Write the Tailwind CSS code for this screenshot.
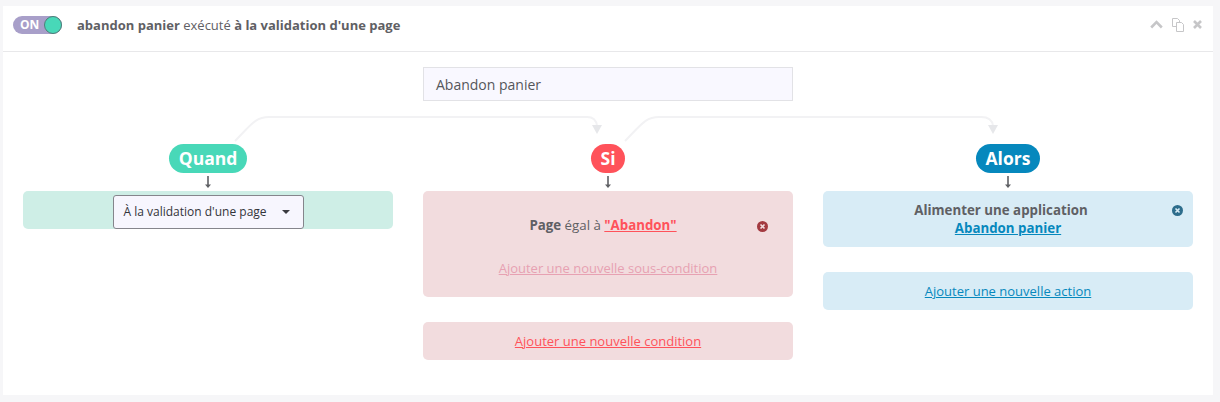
<!DOCTYPE html>
<html lang="fr">

<head>
  <meta charset="UTF-8">
  <title>Abandon panier</title>
  <script src="https://cdn.jsdelivr.net/npm/@tailwindcss/browser@4"></script>
</head>

<body class="bg-[#f6f6f8] font-['Open_Sans',sans-serif] text-[#5f6064] h-[402px] overflow-hidden">
  <div class="pt-[6px] pl-[3px] pr-[7px]">
    <div class="relative bg-white h-[389px]">
      <!-- header -->
      <div class="h-[46px] border-b border-[#e8e8ea] flex items-center pl-[10px] pr-[11px] pb-[8px]">
        <div class="relative w-[49px] h-[18px] rounded-full bg-[#a89fc9] text-white text-[12px] font-bold leading-[18px] pl-[7px]">
          ON
          <span class="absolute right-0 top-0 w-[18px] h-[18px] rounded-full bg-[#48d8b8] border border-[#4d7f78]"></span>
        </div>
        <p class="ml-[15px] text-[13px] leading-[18px]"><b>abandon panier</b> exécuté <b>à la validation d'une page</b></p>
        <div class="ml-auto flex items-center gap-[8px] text-[#c6c6c8]">
          <svg width="13" height="9" viewBox="0 0 13 9" fill="none" stroke="currentColor" stroke-width="2.6"><path d="M1.2 7.5 6.5 2.2l5.3 5.3" /></svg>
          <svg width="14" height="14" viewBox="0 0 14 14" fill="#fff" stroke="currentColor"><path d="M1.500.5h5l2 2v6h-7z" /><path d="M5.500 4.500h5l2 2v7h-7z" /></svg>
          <svg width="9" height="9" viewBox="0 0 9 9" fill="none" stroke="currentColor" stroke-width="2.6"><path d="m1 1 7 7M8 1 1 8" /></svg>
        </div>
      </div>

      <!-- name -->
      <div class="flex justify-center mt-[15px]">
        <div class="w-[370px] h-[34px] border border-[#e2e2e6] bg-[#f9f8ff] px-3 text-[14px] leading-[33px] text-[#55565a]">Abandon panier</div>
      </div>

      <!-- connectors between steps -->
      <svg class="absolute left-0 top-0" width="1210" height="140" fill="none">
        <path d="M232 135C248 119 252 111 266 111H584Q593 111 594 120" stroke="#f2f2f4" stroke-width="2" />
        <path d="M589 119h10l-5 9z" fill="#e6e7ea" />
        <path d="M622 135C638 119 642 111 656 111H978Q989 111 990 120" stroke="#f2f2f4" stroke-width="2" />
        <path d="M985 119h10l-5 9z" fill="#e6e7ea" />
      </svg>

      <!-- columns -->
      <div class="grid grid-cols-[370px_370px_370px] gap-[30px] pl-[20px] mt-[43px]">
        <!-- quand -->
        <div class="flex flex-col items-center">
          <div class="h-[29px] px-[10px] rounded-full bg-[#48d8b8] text-white text-[17.500px] font-bold leading-[29px]">Quand</div>
          <svg class="mt-[3px]" width="8" height="12" viewBox="0 0 8 12" fill="#5f6064"><path d="M3.200 0h1.600v9H3.200z" /><path d="M1 8.500h6L4 12z" /></svg>
          <div class="mt-[3px] w-full h-[38px] rounded-[5px] bg-[#ceeee6] flex justify-center items-end">
            <div class="w-[191px] h-[34px] border border-[#85858c] rounded-[3px] bg-[#f7f6fe] flex items-center justify-between pl-[10px] pr-[13px] text-[12px] text-[#33343a]">
              À la validation d'une page
              <span class="w-0 h-0 border-x-[4px] border-x-transparent border-t-[4px] border-t-[#3a3a40]"></span>
            </div>
          </div>
        </div>

        <!-- si -->
        <div class="flex flex-col items-center">
          <div class="h-[29px] px-[10px] rounded-full bg-[#ff525a] text-white text-[17.500px] font-bold leading-[29px]">Si</div>
          <svg class="mt-[3px]" width="8" height="12" viewBox="0 0 8 12" fill="#5f6064"><path d="M3.200 0h1.600v9H3.200z" /><path d="M1 8.500h6L4 12z" /></svg>
          <div class="relative mt-[3px] w-full h-[106px] rounded-[5px] bg-[#f2dcde] flex flex-col items-center text-[13px]">
            <p class="mt-[25px] leading-[18px] text-[13.300px] mr-[10px]"><b>Page</b> égal à <a href="#" class="font-bold text-[#ff525a] underline">"Abandon"</a></p>
            <a href="#" class="mt-[25px] leading-[18px] text-[#e7a1b2] underline">Ajouter une nouvelle sous-condition</a>
            <svg class="absolute left-[334px] top-[30px]" width="11" height="11" viewBox="0 0 11 11"><circle cx="5.500" cy="5.500" r="5.500" fill="#a33a40" /><path d="m3.500 3.500 4 4m0-4-4 4" stroke="#f2dcde" stroke-width="1.600" /></svg>
          </div>
          <div class="mt-[25px] w-full h-[38px] pt-[2px] rounded-[5px] bg-[#f2dcde] flex items-center justify-center text-[13px]">
            <a href="#" class="text-[#ff525a] underline">Ajouter une nouvelle condition</a>
          </div>
        </div>

        <!-- alors -->
        <div class="flex flex-col items-center">
          <div class="h-[29px] px-[10px] rounded-full bg-[#0688bd] text-white text-[17.500px] font-bold leading-[29px]">Alors</div>
          <svg class="mt-[3px]" width="8" height="12" viewBox="0 0 8 12" fill="#5f6064"><path d="M3.200 0h1.600v9H3.200z" /><path d="M1 8.500h6L4 12z" /></svg>
          <div class="relative mt-[3px] w-full h-[56px] rounded-[5px] bg-[#d8ecf6] flex flex-col items-center pt-[10px] text-[13.300px] leading-[18px]">
            <b class="mr-[14px]">Alimenter une application</b>
            <a href="#" class="font-bold text-[#0688bd] underline">Abandon panier</a>
            <svg class="absolute left-[349px] top-[14px]" width="11" height="11" viewBox="0 0 11 11"><circle cx="5.500" cy="5.500" r="5.500" fill="#2d6d8c" /><path d="m3.500 3.500 4 4m0-4-4 4" stroke="#d8ecf6" stroke-width="1.600" /></svg>
          </div>
          <div class="mt-[25px] w-full h-[38px] pt-[2px] rounded-[5px] bg-[#d8ecf6] flex items-center justify-center text-[13px]">
            <a href="#" class="text-[#0688bd] underline">Ajouter une nouvelle action</a>
          </div>
        </div>
      </div>
    </div>
  </div>
</body>

</html>
